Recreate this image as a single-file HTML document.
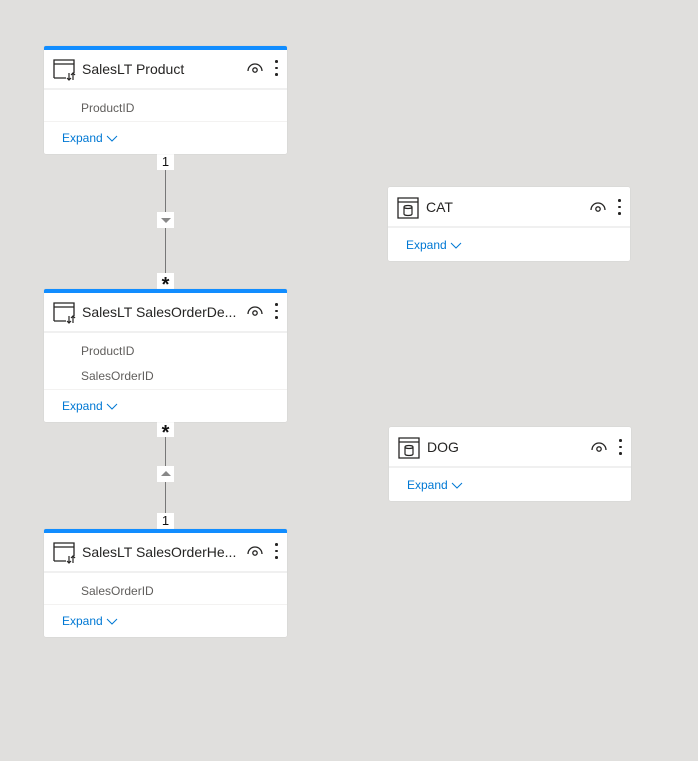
<!DOCTYPE html>
<html><head><meta charset="utf-8"><style>
body{margin:0;width:698px;height:761px;background:#e0dfdd;position:relative;overflow:hidden;font-family:"Segoe UI","Liberation Sans",sans-serif;}
.c{position:absolute;background:#fff;border-radius:2px;box-shadow:0 0 1px rgba(0,0,0,.15);}
.bl{border-top:4px solid #118dff;}
.h{height:38px;border-bottom:2px solid #f0f0f0;position:relative;}
.t{position:absolute;left:38px;top:11px;font-size:14px;color:#252423;}
.ic{position:absolute;left:9px;top:8px;}
.eye{position:absolute;right:24px;top:12px;}
.dots{position:absolute;right:9px;top:10px;width:3px;}
.dots i{display:block;width:2.5px;height:2.5px;background:#252423;border-radius:50%;margin-bottom:4px;}
.r{font-size:12px;color:#605e5c;padding-left:37px;height:25px;line-height:25px;}
.rows{padding-top:6px;border-bottom:1px solid #f3f2f1;}
.ex{font-size:12px;color:#0078d4;padding-left:18px;height:32px;line-height:32px;}
.ex svg{vertical-align:middle;margin-left:3px}
.line{position:absolute;left:165px;width:1px;background:#777;}
.lb{position:absolute;left:157px;width:17px;height:16px;background:#fff;font-size:13px;text-align:center;line-height:16px;color:#111;}
.st{font-size:20px;line-height:24px;font-weight:bold}
</style></head><body>
<div class="line" style="top:154px;height:135px"></div>
<div class="line" style="top:421px;height:108px"></div>
<div class="lb" style="top:154px">1</div>
<div class="lb" style="top:212px"><svg width="12" height="8" viewBox="0 0 12 8"><path d="M1 2h10l-5 5z" fill="#888"/></svg></div>
<div class="lb st" style="top:273px">*</div>
<div class="lb st" style="top:421px">*</div>
<div class="lb" style="top:466px"><svg width="12" height="8" viewBox="0 0 12 8"><path d="M1 6h10l-5 -5z" fill="#888"/></svg></div>
<div class="lb" style="top:513px">1</div>

<div class="c bl" style="left:44px;top:46px;width:243px;">
 <div class="h"><svg class="ic" width="24" height="24" viewBox="0 0 24 24"><path d="M1 20V2h20v13M1 6h20M1 20h12" fill="none" stroke="#252423" stroke-width="1.3"/><path d="M16 15v7M14 20l2 2 2-2M20 22v-7M18 17l2-2 2 2" fill="none" stroke="#252423" stroke-width="1.2"/></svg><span class="t">SalesLT Product</span>
 <svg class="eye" width="16" height="12" viewBox="0 0 16 12"><path d="M1 9a7 7 0 0 1 14 0" fill="none" stroke="#252423" stroke-width="1.3"/><circle cx="8" cy="8" r="2.2" fill="none" stroke="#252423" stroke-width="1.3"/></svg><div class="dots"><i></i><i></i><i></i></div></div>
 <div class="rows"><div class="r">ProductID</div></div>
 <div class="ex">Expand<svg width="12" height="8" viewBox="0 0 12 8"><path d="M1 1l5 5 5-5" fill="none" stroke="#0078d4"/></svg></div>
</div>

<div class="c bl" style="left:44px;top:289px;width:243px;">
 <div class="h"><svg class="ic" width="24" height="24" viewBox="0 0 24 24"><path d="M1 20V2h20v13M1 6h20M1 20h12" fill="none" stroke="#252423" stroke-width="1.3"/><path d="M16 15v7M14 20l2 2 2-2M20 22v-7M18 17l2-2 2 2" fill="none" stroke="#252423" stroke-width="1.2"/></svg><span class="t">SalesLT SalesOrderDe...</span>
 <svg class="eye" width="16" height="12" viewBox="0 0 16 12"><path d="M1 9a7 7 0 0 1 14 0" fill="none" stroke="#252423" stroke-width="1.3"/><circle cx="8" cy="8" r="2.2" fill="none" stroke="#252423" stroke-width="1.3"/></svg><div class="dots"><i></i><i></i><i></i></div></div>
 <div class="rows"><div class="r">ProductID</div><div class="r">SalesOrderID</div></div>
 <div class="ex">Expand<svg width="12" height="8" viewBox="0 0 12 8"><path d="M1 1l5 5 5-5" fill="none" stroke="#0078d4"/></svg></div>
</div>

<div class="c bl" style="left:44px;top:529px;width:243px;">
 <div class="h"><svg class="ic" width="24" height="24" viewBox="0 0 24 24"><path d="M1 20V2h20v13M1 6h20M1 20h12" fill="none" stroke="#252423" stroke-width="1.3"/><path d="M16 15v7M14 20l2 2 2-2M20 22v-7M18 17l2-2 2 2" fill="none" stroke="#252423" stroke-width="1.2"/></svg><span class="t">SalesLT SalesOrderHe...</span>
 <svg class="eye" width="16" height="12" viewBox="0 0 16 12"><path d="M1 9a7 7 0 0 1 14 0" fill="none" stroke="#252423" stroke-width="1.3"/><circle cx="8" cy="8" r="2.2" fill="none" stroke="#252423" stroke-width="1.3"/></svg><div class="dots"><i></i><i></i><i></i></div></div>
 <div class="rows"><div class="r">SalesOrderID</div></div>
 <div class="ex">Expand<svg width="12" height="8" viewBox="0 0 12 8"><path d="M1 1l5 5 5-5" fill="none" stroke="#0078d4"/></svg></div>
</div>

<div class="c" style="left:388px;top:187px;width:242px;height:74px">
 <div class="h" style="height:39px"><svg class="ic" style="top:10px" width="22" height="22" viewBox="0 0 22 22"><path d="M1 1h20v20H1zM1 5h20" fill="none" stroke="#252423" stroke-width="1.3"/><path d="M7 10a4 1.5 0 0 1 8 0v7a4 1.5 0 0 1-8 0zM7 10a4 1.5 0 0 0 8 0" fill="none" stroke="#252423" stroke-width="1.2"/></svg><span class="t" style="top:12px">CAT</span>
 <svg class="eye" style="top:14px" width="16" height="12" viewBox="0 0 16 12"><path d="M1 9a7 7 0 0 1 14 0" fill="none" stroke="#252423" stroke-width="1.3"/><circle cx="8" cy="8" r="2.2" fill="none" stroke="#252423" stroke-width="1.3"/></svg><div class="dots" style="top:12px"><i></i><i></i><i></i></div></div>
 <div class="ex" style="height:34px;line-height:34px">Expand<svg width="12" height="8" viewBox="0 0 12 8"><path d="M1 1l5 5 5-5" fill="none" stroke="#0078d4"/></svg></div>
</div>

<div class="c" style="left:389px;top:427px;width:242px;height:74px">
 <div class="h" style="height:39px"><svg class="ic" style="top:10px" width="22" height="22" viewBox="0 0 22 22"><path d="M1 1h20v20H1zM1 5h20" fill="none" stroke="#252423" stroke-width="1.3"/><path d="M7 10a4 1.5 0 0 1 8 0v7a4 1.5 0 0 1-8 0zM7 10a4 1.5 0 0 0 8 0" fill="none" stroke="#252423" stroke-width="1.2"/></svg><span class="t" style="top:12px">DOG</span>
 <svg class="eye" style="top:14px" width="16" height="12" viewBox="0 0 16 12"><path d="M1 9a7 7 0 0 1 14 0" fill="none" stroke="#252423" stroke-width="1.3"/><circle cx="8" cy="8" r="2.2" fill="none" stroke="#252423" stroke-width="1.3"/></svg><div class="dots" style="top:12px"><i></i><i></i><i></i></div></div>
 <div class="ex" style="height:34px;line-height:34px">Expand<svg width="12" height="8" viewBox="0 0 12 8"><path d="M1 1l5 5 5-5" fill="none" stroke="#0078d4"/></svg></div>
</div>
</body></html>
